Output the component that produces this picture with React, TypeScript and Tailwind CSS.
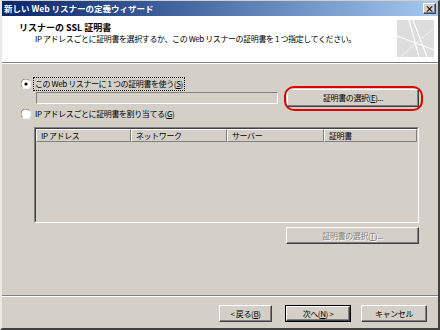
import React from 'react';

const btn =
  'flex items-center justify-center bg-[#d4d0c8] border border-t-white border-l-white border-r-[#404040] border-b-[#404040] shadow-[inset_-1px_-1px_0_#808080]';

function Radio({ checked }: { checked?: boolean }) {
  return (
    <svg width="10" height="10" viewBox="0 0 10 10" className="shrink-0">
      <circle cx="5" cy="5" r="4.5" fill="#ffffff" />
      <path d="M1.3 8.2 A4.5 4.5 0 0 1 8.2 1.3" stroke="#808080" strokeWidth="1" fill="none" />
      <path d="M8.7 1.8 A4.5 4.5 0 0 1 1.8 8.7" stroke="#ffffff" strokeWidth="1" fill="none" />
      {checked && <circle cx="5" cy="5" r="1.6" fill="#000000" />}
    </svg>
  );
}

function HeaderIcon() {
  return (
    <svg width="37" height="37" viewBox="0 0 37 37">
      <rect width="37" height="37" fill="#dddddd" />
      <path d="M12 0 L22 37" stroke="#ffffff" strokeWidth="1.2" />
      <path d="M16 0 L30 37" stroke="#ffffff" strokeWidth="1.2" />
      <path d="M0 16 L37 30" stroke="#ffffff" strokeWidth="1" />
      <path d="M37 8 L3 37" stroke="#f4f4f4" strokeWidth="1" />
    </svg>
  );
}

export default function App() {
  const columns = [
    { label: 'IP アドレス', w: 'w-[95px]' },
    { label: 'ネットワーク', w: 'w-[96px]' },
    { label: 'サーバー', w: 'w-[97px]' },
    { label: '証明書', w: 'flex-1' },
  ];

  return (
    <div className="w-[440px] h-[330px] flex flex-col bg-[#d4d0c8] border-t border-l-2 border-t-[#d4d0c8] border-l-[#ece9e4] border-r-2 border-b-2 border-r-[#404040] border-b-[#404040] text-[8px] tracking-[-0.4px] text-black [font-family:'Noto_Sans_CJK_JP',sans-serif] overflow-hidden">
      {/* Title bar */}
      <div className="h-[15px] shrink-0 flex items-center justify-between pl-[2px] pr-[2px] bg-gradient-to-r from-[#0a246a] to-[#a6caf0]">
        <span className="text-white font-bold text-[8.5px] tracking-normal leading-none">新しい Web リスナーの定義ウィザード</span>
        <div className={`${btn} w-[13px] h-[11px] text-[9px] font-bold leading-none tracking-normal`}>×</div>
      </div>

      {/* Header */}
      <div className="h-[46px] shrink-0 bg-white flex justify-between pr-[4px]">
        <div className="pl-[15px] pt-[6px] leading-[11px]">
          <p className="pl-[2px] font-bold text-[9px] tracking-normal">リスナーの SSL 証明書</p>
          <p className="pl-[18px]">IP アドレスごとに証明書を選択するか、この Web リスナーの証明書を 1 つ指定してください。</p>
        </div>
        <div className="pt-[4px]">
          <HeaderIcon />
        </div>
      </div>
      <div className="shrink-0 border-t border-t-[#808080] border-b border-b-white" />

      {/* Body */}
      <div className="h-[231px] shrink-0 flex flex-col pl-[19px] pr-[19px] relative">
        <div className="mt-[13px] h-[14px] flex items-center gap-[2px]">
          <Radio checked />
          <span className="border border-dotted border-black px-[1px] leading-[12px]">
            この Web リスナーに 1 つの証明書を使う(<u>S</u>)
          </span>
        </div>

        <div className="-mt-[2px] h-[18px] flex items-center gap-[9px] pl-[15px]">
          <div className="w-[242px] h-[12px] bg-[#d4d0c8] border border-t-[#808080] border-l-[#808080] border-r-white border-b-white" />
          <div className={`${btn} w-[132px] h-[18px] relative`}>
            <span>
              証明書の選択(<u>E</u>)...
            </span>
            <div className="absolute -left-[4px] -right-[5px] -top-[4px] -bottom-[5px] rounded-[10px] border-2 border-[#e00000]" />
          </div>
        </div>

        <div className="h-[14px] flex items-center gap-[2px]">
          <Radio />
          <span className="px-[2px] leading-[12px]">
            IP アドレスごとに証明書を割り当てる(<u>G</u>)
          </span>
        </div>

        {/* List view */}
        <div className="mt-[6px] ml-[13px] h-[96px] border border-t-[#808080] border-l-[#808080] border-r-white border-b-white">
          <div className="h-full border border-t-[#404040] border-l-[#404040] border-r-[#d4d0c8] border-b-[#d4d0c8]">
            <div className="flex h-[13px]">
              {columns.map((c) => (
                <div
                  key={c.label}
                  className={`${c.w} h-full flex items-center pl-[4px] border border-t-white border-l-white border-r-[#808080] border-b-[#808080] leading-none`}
                >
                  {c.label}
                </div>
              ))}
            </div>
          </div>
        </div>

        <div className="mt-[4px] self-end">
          <div className={`${btn} w-[133px] h-[17px] text-[#808080] [text-shadow:1px_1px_0_#ffffff]`}>
            証明書の選択(<u>T</u>)...
          </div>
        </div>
      </div>

      <div className="shrink-0 border-t border-t-[#808080] border-b border-b-white" />

      {/* Footer */}
      <div className="flex-1 flex items-start pt-[8px] pl-[217px]">
        <div className={`${btn} w-[53px] h-[17px]`}>
          &lt; 戻る(<u>B</u>)
        </div>
        <div className="ml-[13px] border border-black">
          <div className={`${btn} w-[64px] h-[15px]`}>
            次へ(<u>N</u>) &gt;
          </div>
        </div>
        <div className={`${btn} ml-[10px] w-[66px] h-[17px]`}>キャンセル</div>
      </div>
    </div>
  );
}
